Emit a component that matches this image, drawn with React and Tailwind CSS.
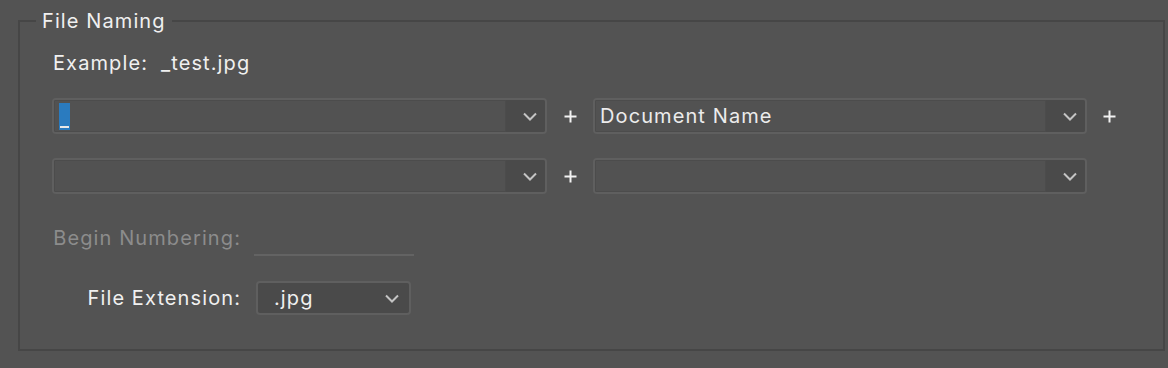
const font = { fontFamily: 'Inter, "Liberation Sans", sans-serif' };

const Chevron = () => (
  <svg width="14" height="9" viewBox="0 0 14 9" fill="none">
    <path d="M1 1.5L7 7.5L13 1.5" stroke="#c4c4c4" strokeWidth="2" />
  </svg>
);

const Plus = () => (
  <svg width="13" height="13" viewBox="0 0 13 13" fill="none">
    <path d="M6.5 0.5V12.5M0.5 6.5H12.5" stroke="#f2f2f2" strokeWidth="2" />
  </svg>
);

const Combo = ({ children, width }) => (
  <div className={`flex h-[36px] ${width} rounded-[4px] border-2 border-[#5f5f5f] overflow-hidden`}>
    <div className="flex flex-1 items-center border border-[#4c4c4c] bg-[#525252] pl-[4px] text-[20px] text-[#ececec]">
      {children}
    </div>
    <div className="flex w-[39px] items-center justify-end bg-[#4a4a4a] pr-[8px] pt-[1px]">
      <Chevron />
    </div>
  </div>
);

export default function App() {
  return (
    <div className="h-[368px] w-[1168px] overflow-hidden bg-[#535353] pt-[10px] pl-[18px]" style={font}>
      <fieldset className="h-[341px] w-[1134px] border-2 border-[#464646]">
        <legend className="ml-[16px] px-[6px] text-[20px] leading-[22px] tracking-[1.1px] text-[#f0f0f0]">File Naming</legend>

        <div className="px-[32px] tracking-[1.1px]">
          <div className="mt-[20px] flex h-[22px] items-center pl-[1px] text-[20px] text-[#f0f0f0]">
            <span>Example:</span>
            <span className="ml-[13px]">_test.jpg</span>
          </div>

          <div className="mt-[24px] flex items-center">
            <Combo width="w-[495px]">
              <span className="flex h-[27px] w-[11px] items-end justify-center bg-[#2a7bbf] leading-none">
                <span className="mb-[2px] h-[2px] w-[9px] bg-[#e8e8e8]" />
              </span>
            </Combo>
            <div className="flex w-[46px] justify-center"><Plus /></div>
            <Combo width="w-[494px]">Document Name</Combo>
            <div className="flex w-[44px] justify-center"><Plus /></div>
          </div>

          <div className="mt-[24px] flex items-center">
            <Combo width="w-[495px]" />
            <div className="flex w-[46px] justify-center"><Plus /></div>
            <Combo width="w-[494px]" />
          </div>

          <div className="mt-[25px] grid grid-cols-[189px_auto] items-center gap-x-[13px]">
            <div className="text-right text-[20px] text-[#8c8c8c]">Begin Numbering:</div>
            <div className="h-[37px] w-[160px] border-b-2 border-[#636363]" />
            <div className="mt-[25px] text-right text-[20px] text-[#f0f0f0]">File Extension:</div>
            <div className="mt-[25px] ml-[2px] flex h-[34px] w-[155px] items-center justify-between rounded-[4px] border-2 border-[#5f5f5f] bg-[#4a4a4a] pl-[16px] pr-[10px]">
              <span className="text-[20px] text-[#f0f0f0]">.jpg</span>
              <Chevron />
            </div>
          </div>
        </div>
      </fieldset>
    </div>
  );
}
